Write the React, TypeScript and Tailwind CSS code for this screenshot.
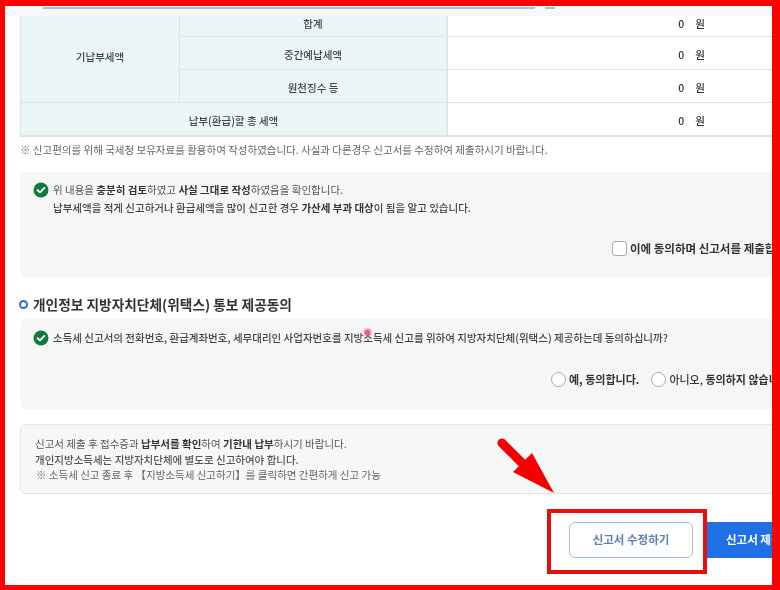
const FONT = "font-['Noto_Sans_CJK_KR','Noto_Sans',sans-serif]";

function Check() {
  return (
    <svg width="16" height="16" viewBox="0 0 16 16" className="shrink-0 mt-[1px]">
      <circle cx="8" cy="8" r="7.5" fill="#0f7a3c" />
      <path d="M4.6 8.2 7 10.4 11.4 5.9" fill="none" stroke="#fff" strokeWidth="1.9" strokeLinecap="round" strokeLinejoin="round" />
    </svg>
  );
}

function Amount() {
  return (
    <div className="flex items-center justify-end gap-[11px] pr-[67px] pt-[3px] text-[10.5px] font-medium text-[#333]">
      <span>0</span>
      <span>원</span>
    </div>
  );
}

function SubRow({ label, height, last }: { label: string; height: string; last?: boolean }) {
  const line = last ? "" : "border-b border-[#dbe5e5]";
  return (
    <div className={`flex ${height}`}>
      <div className={`w-[266px] flex items-center justify-center pt-[3px] bg-[#eaf5f6] text-[10.5px] font-medium text-[#444] ${line}`}>{label}</div>
      <div className={`flex-1 flex items-center justify-end border-l-2 border-[#dbe9ea] ${line}`}>
        <Amount />
      </div>
    </div>
  );
}

export default function App() {
  return (
    <div className={`relative w-[780px] h-[590px] box-border overflow-hidden bg-white border-t-[6px] border-l-[5px] border-r-[8px] border-b-[5px] border-[#ff0000] ${FONT}`}>
      <div className="w-[767px] h-[579px] overflow-hidden blur-[0.4px]">
        <div className="relative z-10 h-[10px] bg-[#f6f8fb] flex items-start pl-[38px] pt-[1px] gap-[10px]">
          <div className="w-[492px] h-[2px] bg-[#a9bfe0]" />
          <div className="w-[10px] h-[2px] bg-[#b5bcc6]" />
        </div>

        <div className="ml-[15px] -mt-[7px] border-b-2 border-[#dbe5e5]">
          <div className="flex border-b border-[#dbe5e5]">
            <div className="w-[160px] flex items-center justify-center pt-[2px] bg-[#eaf5f6] border-r border-[#dbe5e5] border-l border-l-[#dbe5e5] text-[10.5px] font-medium text-[#444]">기납부세액</div>
            <div className="flex-1 flex flex-col">
              <SubRow label="합계" height="h-[28px]" />
              <SubRow label="중간예납세액" height="h-[33px]" />
              <SubRow label="원천징수 등" height="h-[32px]" last />
            </div>
          </div>
          <div className="flex h-[32px]">
            <div className="w-[426px] flex items-center justify-center pt-[3px] bg-[#eaf5f6] border-l border-[#dbe5e5] text-[10.5px] font-medium text-[#444]">납부(환급)할 총 세액</div>
            <div className="flex-1 flex items-center justify-end border-l-2 border-[#dbe9ea]"><Amount /></div>
          </div>
        </div>

        <p className="ml-[15px] mt-[5px] h-[16px] leading-[16px] text-[10.5px] text-[#666] whitespace-nowrap">※ 신고편의를 위해 국세청 보유자료를 활용하여 작성하였습니다. 사실과 다른경우 신고서를 수정하여 제출하시기 바랍니다.</p>

        <section className="ml-[15px] mt-[14px] h-[105px] w-[780px] rounded-l-[6px] bg-[#f5f7f6] pl-[13px] pt-[9px] relative">
          <div className="flex gap-[4px]">
            <Check />
            <div className="text-[10.5px] leading-[17.5px] text-[#555] whitespace-nowrap">
              <p>위 내용을 <b className="font-bold text-[#333]">충분히 검토</b>하였고 <b className="font-bold text-[#333]">사실 그대로 작성</b>하였음을 확인합니다.</p>
              <p className="text-[#444] font-medium">납부세액을 적게 신고하거나 환급세액을 많이 신고한 경우 <b className="font-bold text-[#333]">가산세 부과 대상</b>이 됨을 알고 있습니다.</p>
            </div>
          </div>
          <label className="absolute left-[592px] top-[68px] flex items-center gap-[3px] text-[11.5px] font-bold text-[#333] whitespace-nowrap">
            <span className="w-[15px] h-[15px] rounded-[3px] border border-[#a8a8a8] bg-white" />
            이에 동의하며 신고서를 제출합니다.
          </label>
        </section>

        <h2 className="ml-[14px] mt-[17px] h-[20px] flex items-center gap-[5px] text-[13.7px] font-bold text-[#333] whitespace-nowrap">
          <span className="w-[9px] h-[9px] rounded-full border-2 border-[#2f6fc4]" />
          개인정보 지방자치단체(위택스) 통보 제공동의
        </h2>

        <section className="ml-[15px] mt-[5px] h-[90px] w-[780px] rounded-l-[6px] bg-[#f5f7f6] pl-[13px] pt-[10px] relative">
          <div className="flex items-center gap-[4px]">
            <Check />
            <p className="text-[10.5px] leading-[16px] font-medium text-[#444] whitespace-nowrap">소득세 신고서의 전화번호, 환급계좌번호, 세무대리인 사업자번호를 지방소득세 신고를 위하여 지방자치단체(위택스) 제공하는데 동의하십니까?</p>
          </div>
          <span className="absolute left-[344px] top-[10px] w-[7px] h-[7px] rounded-full bg-[#f0506e] blur-[1px]" />
          <div className="absolute left-[531px] top-[52px] flex items-center text-[11px] text-[#333] whitespace-nowrap">
            <span className="w-[15px] h-[15px] rounded-full border border-[#a8a8a8] bg-white mr-[3px]" />
            <span className="font-bold">예, 동의합니다.</span>
            <span className="w-[15px] h-[15px] rounded-full border border-[#a8a8a8] bg-white ml-[12px] mr-[3px]" />
            <span className="font-medium">아니오, <b className="font-bold">동의하지 않습니다.</b></span>
          </div>
        </section>

        <section className="ml-[15px] mt-[15px] h-[70px] w-[780px] rounded-l-[6px] border border-[#e3e5e5] bg-[#f6f7f7] pl-[14px] pt-[11px] text-[10.5px] leading-[15.5px] text-[#555] whitespace-nowrap">
          <p>신고서 제출 후 접수증과 <b className="font-bold text-[#333]">납부서를 확인</b>하여 <b className="font-bold text-[#333]">기한내 납부</b>하시기 바랍니다.</p>
          <p className="font-medium">개인지방소득세는 지방자치단체에 별도로 신고하여야 합니다.</p>
          <p className="pl-[1px] text-[#666]">※ 소득세 신고 종료 후 【지방소득세 신고하기】를 클릭하면 간편하게 신고 가능</p>
        </section>

        <div className="mt-[28px] ml-[564px] flex gap-[12px]">
          <button className="w-[124px] h-[36px] shrink-0 rounded-[6px] border-[1.5px] border-[#a6bedd] bg-white text-[11.5px] font-semibold text-[#5f82b4] whitespace-nowrap">신고서 수정하기</button>
          <button className="w-[120px] h-[36px] shrink-0 rounded-l-[3px] bg-[#1f6fe5] text-[11.5px] font-semibold text-white text-left pl-[21px] whitespace-nowrap">신고서 제출하기</button>
        </div>
      </div>

      <div className="absolute left-[542px] top-[503px] w-[160px] h-[65px] border-4 border-[#e31010]" />
      <svg className="absolute left-[490px] top-[430px]" width="70" height="70" viewBox="0 0 70 70">
        <path d="M7 7 L31 31" stroke="#f40000" strokeWidth="9" strokeLinecap="round" />
        <path d="M59 57 L37 17 L18 36 Z" fill="#f40000" />
      </svg>
    </div>
  );
}
